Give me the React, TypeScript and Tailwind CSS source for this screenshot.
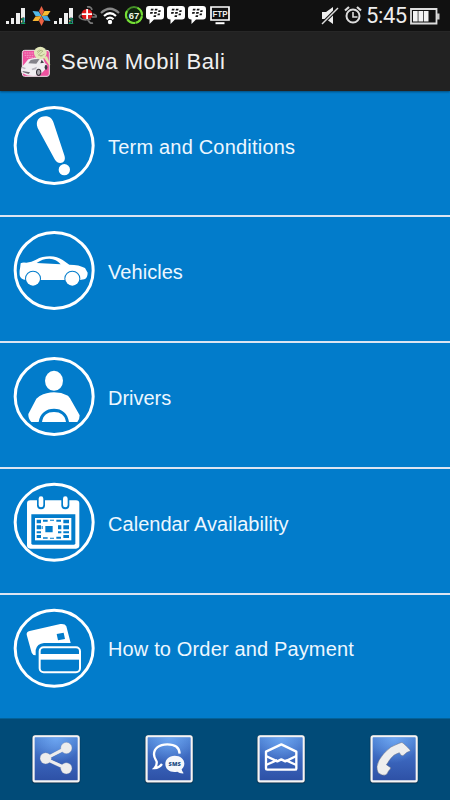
import type { ReactNode } from 'react';

const W = '#ffffff';
const B = '#027ccb';

function Ring({ top, cy, children }: { top: number; cy: number; children: ReactNode }) {
  return (
    <svg className="block h-[82px] w-[82px] shrink-0" viewBox={`39 ${top} 246 246`} fill={W}>
      <ellipse cx="162.500" cy={cy} rx="117" ry="114" fill="none" stroke={W} strokeWidth="9" />
      {children}
    </svg>
  );
}

const TermsIcon = () => (
  <Ring top={27} cy={151.5}>
    <path d="M113 99C105 77 118 64 136 64C150 64 157 72 161 84L193 181C198 196 191 204 181 204C173 204 168 200 164 193Z" />
    <circle cx="193" cy="224" r="17" />
  </Ring>
);

const VehicleIcon = () => (
  <Ring top={30} cy={151.5}>
    <path d="M62 130Q67 126 79 128Q95 126 108 119Q127 109 150 109Q172 110 188 120L208 134Q238 134 255 144L263 158Q263 173 253 178L240 180H78Q61 178 59 166Q58 151 60 146Z" />
    <path d="M110 129Q127 116 148 116Q169 117 182 133Z" fill={B} />
    <circle cx="99" cy="176" r="24" fill={B} />
    <circle cx="217" cy="176" r="24" fill={B} />
    <circle cx="99" cy="176" r="21" />
    <circle cx="217" cy="176" r="21" />
  </Ring>
);

const DriverIcon = () => (
  <Ring top={33} cy={154.5}>
    <ellipse cx="162" cy="107.500" rx="27" ry="30" />
    <path d="M119 153Q140 142 162 142Q184 142 204 152L210 160L239 211Q239 224 232 231H207C203 205 186 191 162 191C138 191 120 205 116 231H94Q84 221 85 207L109 161Z" />
    <path d="M126 231C129 211 141 201 162 201C182 201 195 211 198 231Z" />
  </Ring>
);

const CalendarIcon = () => (
  <Ring top={36} cy={157}>
    <rect x="81" y="91" width="157" height="145" rx="10" />
    <path d="M94 133H226V220Q226 224 222 224H98Q94 224 94 220Z" fill={B} />
    <rect x="111" y="77" width="24" height="41" rx="12" fill={B} />
    <rect x="184" y="77" width="24" height="41" rx="12" fill={B} />
    <rect x="116" y="79" width="14" height="33" rx="7" />
    <rect x="189" y="79" width="14" height="33" rx="7" />
    <rect x="105" y="144" width="109" height="67" />
    <g fill={B}>
      <path d="M110 149h13v11h-13zM129 149h14v6h-14zM150 149h12v3h-12zM169 149h14v6h-14zM190 149h17v11h-17z" />
      <path d="M110 166h13v12h-13zM110 184h13v6h-13zM110 195h13v9h-13zM129 202h14v4h-14zM169 200h14v6h-14zM190 166h17v12h-17zM190 184h17v6h-17zM190 195h17v9h-17z" />
      <path d="M136 168h22v19h-22zM174 166h10v12h-10zM174 184h10v6h-10zM125 168h3v9h-3zM150 203h12v3h-12z" />
    </g>
  </Ring>
);

const CardsIcon = () => (
  <Ring top={36} cy={157}>
    <path d="M80 116Q79 107 89 105L181 84Q195 82 199 91L212 141H132Q111 143 107 162V178Q98 178 95 170Z" />
    <path d="M170 114L191 110L195 129L174 133Z" fill={B} />
    <rect x="119" y="154" width="121" height="75" rx="12" fill={B} stroke={W} strokeWidth="6" />
    <rect x="120" y="174" width="120" height="17" />
  </Ring>
);

const rows = [
  { label: 'Term and Conditions', icon: <TermsIcon />, row: 'h-[126px]', text: 'tracking-[0.200px] pt-[44px]' },
  { label: 'Vehicles', icon: <VehicleIcon />, row: 'h-[126px]', text: 'tracking-[0.050px] pt-[43px]' },
  { label: 'Drivers', icon: <DriverIcon />, row: 'h-[126px]', text: 'tracking-[-0.030px] pt-[43px]' },
  { label: 'Calendar Availability', icon: <CalendarIcon />, row: 'h-[126px]', text: 'tracking-[0.040px] pt-[43px]' },
  { label: 'How to Order and Payment', icon: <CardsIcon />, row: 'h-[123px]', text: 'tracking-[0.150px] pt-[42px]' },
];

function Signal({ sim }: { sim: string }) {
  return (
    <svg width="21" height="20" viewBox="0 0 21 20" fill="#eee">
      <path d="M0 15h3v3H0zM5 12h3v6H5zM10 7h4v11h-4zM15 2h4v16h-4z" />
      <text x="14.500" y="18" fontFamily="Liberation Sans, sans-serif" fontWeight="700" fontSize="9" fill="#129b67" stroke="#111" strokeWidth="1" paintOrder="stroke">{sim}</text>
    </svg>
  );
}

function Bbm() {
  return (
    <svg width="18" height="20" viewBox="0 0 18 20" fill="#fff">
      <path d="M3 0H15Q18 0 18 3V10.500Q18 13.500 15 13.500H8L3.500 18V13.500Q0 13.500 0 10.500V3Q0 0 3 0Z" />
      <path d="M5 2.800h2.600l-.4 1.800H4.600zM9 2.800h2.600l-.4 1.800H8.600zM4.300 6h2.600l-.4 1.800H3.900zM8.300 6h2.600l-.4 1.800H7.900zM12.500 4.300h2.300l-.4 1.800h-2.300zM11.800 7.500h2.300l-.4 1.800h-2.300zM7.800 9.200h2.500l-.4 1.800H7.400z" fill="#151515" />
    </svg>
  );
}

function StatusBar() {
  return (
    <div className="flex h-[32px] items-start border-b border-[#292929] bg-[#111111] pl-[6px] pt-[6px]">
      <Signal sim="1" />
      <svg className="ml-[5px]" width="19" height="20" viewBox="0 0 19 20">
        <g transform="translate(9.500 10)">
          <path d="M0 0L-2.500-5L0-10L2.500-5Z" fill="#e96143" />
          <path d="M0 0L3-5L9-5L6-0.500Z" fill="#f9bd35" />
          <path d="M0 0L6 0L9 5L3 4.500Z" fill="#48a8df" />
          <path d="M0 0L2.500 5L0 10L-2.500 5Z" fill="#ec6243" />
          <path d="M0 0L-3 5L-9 5L-6 0.500Z" fill="#f6b432" />
          <path d="M0 0L-6 0L-9-5L-3-4.500Z" fill="#53b9e8" />
        </g>
      </svg>
      <div className="ml-[3px]"><Signal sim="2" /></div>
      <svg className="ml-[3px]" width="20" height="20" viewBox="0 0 20 20">
        <circle cx="9" cy="8.500" r="5.500" fill="#e21a1a" />
        <g fill="none" stroke="#777" strokeWidth="1.700">
          <path d="M4 8Q0 10 2 12Q5 15 13 13M15 8Q19 9 18 11L14 11M9 1Q13 0 14 4M10 14Q12 18 15 17" />
        </g>
        <path d="M8.200 3h1.800v4.300h4v1.800h-4v4h-1.800v-4H4V7.300h4.200z" fill="#fff" />
      </svg>
      <svg className="ml-[2px]" width="20" height="20" viewBox="0 0 20 20" fill="none" strokeWidth="2.200">
        <path d="M1 7Q10-1.500 19 7" stroke="#888" />
        <path d="M4 10Q10 4.500 16 10" stroke="#fff" />
        <path d="M6.500 13.300Q10 10 13.500 13.300" stroke="#fff" />
        <circle cx="10" cy="16" r="2.200" fill="#fff" />
      </svg>
      <svg className="-mt-px ml-[4px]" width="20" height="20" viewBox="0 0 20 20">
        <circle cx="10" cy="10" r="8" fill="#11230e" stroke="#458e28" strokeWidth="2" />
        <path d="M13.500 2.800A8 8 0 0 1 10 18A8 8 0 0 1 3 6" fill="none" stroke="#75df35" strokeWidth="2" strokeDasharray="9 1" />
        <text x="10" y="13.500" textAnchor="middle" fontSize="9.500" fontWeight="700" fontFamily="Liberation Sans, sans-serif" fill="#eff7e7">67</text>
      </svg>
      <div className="ml-[2px] flex gap-[3px]"><Bbm /><Bbm /><Bbm /></div>
      <svg className="ml-[4px]" width="20" height="20" viewBox="0 0 20 20">
        <path d="M1 1H19V14H1Z" fill="#111" stroke="#fff" strokeWidth="1.700" />
        <path d="M5.500 16.200h9v2h-9z" fill="#fff" />
        <text x="10" y="11" textAnchor="middle" fontSize="9" fontWeight="700" fontFamily="Liberation Sans, sans-serif" fill="#eee" textLength="15" lengthAdjust="spacingAndGlyphs">FTP</text>
      </svg>
      <svg className="ml-[91px]" width="19" height="20" viewBox="0 0 19 20">
        <path d="M1 6h4l7-5v17l-7-5H1z" fill="#eee" />
        <path d="M1 18L17 2" stroke="#111" strokeWidth="3.500" />
        <path d="M1 18L17 2" stroke="#ddd" strokeWidth="1.500" />
      </svg>
      <svg className="ml-[4px]" width="18" height="20" viewBox="0 0 18 20" fill="none" stroke="#ddd">
        <circle cx="9" cy="10" r="6.500" strokeWidth="2" />
        <path d="M9 6v5h4.500" strokeWidth="1.600" />
        <path d="M1 4.500L5 1M17 4.500L13 1" strokeWidth="2.200" />
      </svg>
      <span className="ml-[4px] mt-[-2px] w-[41px] whitespace-nowrap font-['Roboto','Liberation_Sans',sans-serif] text-[22px] leading-[24px] tracking-[-0.400px] text-[#eeeeee]">5:45</span>
      <svg className="ml-[3px] mt-px" width="30" height="20" viewBox="0 0 30 20">
        <path d="M1 2H26.500V16.500H1Z" fill="#111" stroke="#ddd" strokeWidth="1.800" />
        <path d="M27 6.500h2.500v6H27z" fill="#ccc" />
        <path d="M3 4h4.700v10.500H3zM8.400 4h4.700v10.500H8.400zM13.800 4h4.700v10.500H13.800z" fill="#f2f2f2" />
      </svg>
    </div>
  );
}

function AppLogo() {
  return (
    <svg width="32" height="34" viewBox="0 0 96 102">
      <rect x="7" y="16" width="81" height="78" rx="7" fill="#ed529f" stroke="#eee3e9" strokeWidth="3" />
      <path d="M13 24H43M14 31H40M20 37H46" stroke="#f69bc6" strokeWidth="3" strokeDasharray="5 2" />
      <path d="M3 74Q3 66 10 61L25 43Q46 35 70 41L75 54L82 61Q81 71 72 77L60 89Q45 96 21 91L4 83Z" fill="#f0eef1" />
      <path d="M25 55L32 45Q45 41 59 42L49 56Z" fill="#85838b" />
      <path d="M61 55L65 44L72 53Z" fill="#414047" />
      <path d="M7 65L18 69L14 73L6 69ZM35 71L51 65L48 73L36 76Z" fill="#bcb8c0" />
      <path d="M7 78L30 82L26 87L10 82Z" fill="#6b6570" />
      <ellipse cx="56" cy="82" rx="8" ry="11" fill="#37343b" />
      <ellipse cx="56" cy="82" rx="5" ry="8" fill="#aaa6ad" />
      <ellipse cx="78" cy="67" rx="4" ry="8" fill="#3d3842" />
      <path d="M70 36L88 61L91 60L81 34Z" fill="#e0e7aa" />
      <circle cx="61" cy="24" r="19" fill="#e2e7b9" />
      <path d="M51 20Q57 12 69 18L55 30L67 33M52 25L64 15M74 27L61 34" fill="none" stroke="#9ba66f" strokeWidth="2" />
    </svg>
  );
}

function ActionTile({ id, children }: { id: string; children: ReactNode }) {
  return (
    <svg className="block h-[52px] w-[52px]" viewBox="91 68 156 156">
      <defs>
        <linearGradient id={id} x1="0" y1="0" x2="0" y2="1">
          <stop offset="0" stopColor="#4f85d6" />
          <stop offset="0.500" stopColor="#3b66bd" />
          <stop offset="1" stopColor="#2d50a5" />
        </linearGradient>
        <radialGradient id={`${id}-shine`} cx="0.500" cy="0" r="0.600">
          <stop offset="0" stopColor="#78b2fb" stopOpacity="0.750" />
          <stop offset="1" stopColor="#78b2fb" stopOpacity="0" />
        </radialGradient>
      </defs>
      <rect x="96" y="76" width="146" height="144" rx="9" fill="#082f4d" opacity="0.600" />
      <rect x="98" y="75" width="142" height="142" rx="8" fill="#747b85" />
      <rect x="102" y="78" width="135" height="135" rx="5" fill={`url(#${id})`} stroke="#f5f5f5" strokeWidth="6" />
      <rect x="105" y="81" width="129" height="129" fill={`url(#${id}-shine)`} />
      {children}
    </svg>
  );
}

function BottomBar() {
  return (
    <div className="flex h-[82px] justify-between border-t border-[#036199] bg-[#014b78] pl-[30px] pr-[30px] pt-[14px]">
      <ActionTile id="share">
        <g fill="#ededed" stroke="#7083aa" strokeWidth="1">
          <path d="M136 141L198 108L203 117L146 145L203 170L198 179L136 150Z" />
          <circle cx="200" cy="113" r="17" /><circle cx="138" cy="144" r="17" /><circle cx="200" cy="174" r="17" />
        </g>
        <path d="M138 145L200 113M138 145L200 174" stroke="#ededed" strokeWidth="8" />
      </ActionTile>
      <ActionTile id="sms">
        <path d="M201 130C200 111 185 102 164 102C139 102 124 114 124 132C124 143 130 148 132 154C133 163 129 170 126 173Q139 173 148 161" fill="none" stroke="#fff" strokeWidth="7" />
        <path d="M186 136C203 136 215 146 215 160C215 167 211 173 207 177Q208 184 213 189Q201 190 194 184C174 188 158 178 158 161C158 147 169 136 186 136Z" fill="#f5f7fb" />
        <text x="186" y="167" fontFamily="Open Sans, sans-serif" fontSize="17" fontWeight="800" textAnchor="middle" fill="#214c83" textLength="37">SMS</text>
      </ActionTile>
      <ActionTile id="mail">
        <g fill="none" stroke="#fff" strokeWidth="7" strokeLinejoin="round">
          <path d="M124 124L170 102L215 124V175Q215 178 211 178H128Q124 178 124 174Z" />
          <path d="M124 137L158 153L170 147L182 153L215 137M124 164L158 149M215 164L182 149" />
        </g>
      </ActionTile>
      <ActionTile id="call">
        <path d="M187 98Q193 95 196 98L209 110L218 120Q216 124 208 126L196 136Q191 139 185 127Q168 130 154 151Q149 160 146 163L159 172Q159 177 153 181Q149 192 143 194Q135 197 122 188Q117 178 118 168Q120 151 138 130Q158 106 182 100Z" fill="#eee" stroke="#666e82" strokeWidth="1.500" />
      </ActionTile>
    </div>
  );
}

export default function App() {
  return (
    <div className="flex h-[800px] w-[450px] flex-col overflow-hidden bg-[#027ccb] font-['Liberation_Sans',Arial,sans-serif]">
      <StatusBar />
      <header className="flex h-[59px] shrink-0 items-start bg-[#222222] pl-[20px] pt-[13px] shadow-[0_1px_2px_rgba(0,0,0,0.4)]">
        <AppLogo />
        <h1 className="ml-[9px] mt-[3px] text-[22px] font-normal leading-[28px] tracking-[0.520px] text-[#f0f0f0]">Sewa Mobil Bali</h1>
      </header>
      <main className="h-[627px] shrink-0">
        {rows.map((item, index) => (
          <div key={item.label} className={`flex pl-[13px] pt-[13px] ${item.row} ${index < 4 ? 'border-b-2 border-[#dce4f2]' : ''}`}>
            {item.icon}
            <span className={`-mt-[13px] ml-[13px] whitespace-nowrap text-[20px] leading-[24px] text-[#edf7ff] ${item.text}`}>{item.label}</span>
          </div>
        ))}
      </main>
      <BottomBar />
    </div>
  );
}
